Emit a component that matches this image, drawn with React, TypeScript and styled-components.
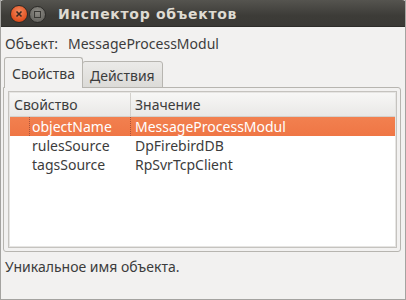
import React from 'react';
import styled, { createGlobalStyle } from 'styled-components';

const GlobalStyle = createGlobalStyle`
  html, body {
    margin: 0;
    padding: 0;
    background: #f2f1f0;
  }
  * {
    box-sizing: border-box;
  }
`;

const rows = [
  { name: 'objectName', value: 'MessageProcessModul', selected: true },
  { name: 'rulesSource', value: 'DpFirebirdDB', selected: false },
  { name: 'tagsSource', value: 'RpSvrTcpClient', selected: false },
];

const App: React.FC = () => {
  return (
    <>
      <GlobalStyle />
      <Window>
        <TitleBar>
          <WindowButtons>
            <CloseButton>
              <svg width="8" height="8" viewBox="0 0 8 8">
                <path d="M1.5 1.5 L6.5 6.5 M6.5 1.5 L1.5 6.5" stroke="#3a2a22" strokeWidth="1.6" />
              </svg>
            </CloseButton>
            <MinButton>
              <MinSquare />
            </MinButton>
          </WindowButtons>
          <Title>Инспектор объектов</Title>
        </TitleBar>
        <Body>
          <ObjectLine>
            <span>Объект:</span>
            <span>MessageProcessModul</span>
          </ObjectLine>
          <TabBar>
            <Tab active>Свойства</Tab>
            <Tab>Действия</Tab>
          </TabBar>
          <Pane>
            <Tree>
              <HeaderRow>
                <HeaderCell width={121}>Свойство</HeaderCell>
                <HeaderCell>Значение</HeaderCell>
              </HeaderRow>
              {rows.map(row => (
                <Row key={row.name} selected={row.selected}>
                  <NameCell selected={row.selected}>
                    <Focus selected={row.selected}>{row.name}</Focus>
                  </NameCell>
                  <ValueCell>{row.value}</ValueCell>
                </Row>
              ))}
            </Tree>
          </Pane>
          <Status>Уникальное имя объекта.</Status>
        </Body>
      </Window>
    </>
  );
};

export default App;

const Window = styled.div`
  width: 406px;
  height: 300px;
  display: flex;
  flex-direction: column;
  border: 1px solid #a4a3a0;
  border-top: none;
  font-family: 'Noto Sans', 'DejaVu Sans', sans-serif;
  font-size: 14px;
  color: #3c3c3c;
  overflow: hidden;
`;

const TitleBar = styled.div`
  height: 27px;
  flex: none;
  margin: 0 -1px;
  display: flex;
  align-items: center;
  background: linear-gradient(#55544f, #3d3c38 60%, #3a3935);
  border-radius: 4px 4px 0 0;
  border-bottom: 1px solid #2e2d2a;
`;

const WindowButtons = styled.div`
  display: flex;
  align-items: center;
  gap: 1px;
  padding-left: 10px;
  padding-top: 2px;
`;

const CloseButton = styled.div`
  width: 18px;
  height: 18px;
  border-radius: 50%;
  background: radial-gradient(circle at 50% 35%, #f38a5f, #e0501f 70%, #b63d15);
  border: 1px solid #2c2b28;
  display: flex;
  align-items: center;
  justify-content: center;
`;

const MinButton = styled.div`
  width: 17px;
  height: 17px;
  border-radius: 50%;
  background: radial-gradient(circle at 50% 35%, #8e8c86, #6a6964 70%, #55544f);
  border: 1px solid #2c2b28;
  display: flex;
  align-items: center;
  justify-content: center;
`;

const MinSquare = styled.div`
  width: 7px;
  height: 7px;
  border: 1.5px solid #3a3935;
`;

const Title = styled.div`
  margin-left: 12px;
  padding-top: 1px;
  font-family: 'DejaVu Sans', sans-serif;
  font-weight: bold;
  font-size: 14px;
  color: #dfdbd2;
  letter-spacing: 0.7px;
`;

const Body = styled.div`
  flex: 1;
  display: flex;
  flex-direction: column;
  padding: 0 4px 0 2px;
`;

const ObjectLine = styled.div`
  height: 31px;
  display: flex;
  align-items: flex-end;
  gap: 10px;
  padding-left: 2px;
  padding-bottom: 5px;
`;

const TabBar = styled.div`
  height: 30px;
  display: flex;
  align-items: flex-end;
  padding-left: 1px;
  position: relative;
  z-index: 1;
  margin-bottom: -1px;
`;

const Tab = styled.div<{ active?: boolean }>`
  height: ${p => (p.active ? 31 : 27)}px;
  padding: 0 7px 0 7px;
  display: flex;
  align-items: center;
  border: 1px solid #b7b5b0;
  border-bottom: ${p => (p.active ? 'none' : '1px solid #b7b5b0')};
  border-radius: 3px 3px 0 0;
  background: ${p => (p.active ? '#f2f1f0' : 'linear-gradient(#ebeae8, #dcdbd8)')};
  margin-left: ${p => (p.active ? 0 : -1)}px;
  padding-top: ${p => (p.active ? 0 : 1)}px;
`;

const Pane = styled.div`
  height: 165px;
  border: 1px solid #b7b5b0;
  border-radius: 0 3px 3px 3px;
  padding: 3px 3px 3px 4px;
  display: flex;
`;

const Tree = styled.div`
  flex: 1;
  background: #ffffff;
  border: 1px solid #c5c3bf;
  box-shadow: inset 0 0 0 1px #e6e5e3;
  display: flex;
  flex-direction: column;
  padding: 1px;
`;

const HeaderRow = styled.div`
  height: 24px;
  display: flex;
  background: linear-gradient(#f7f7f6, #e9e8e6);
  border-bottom: 1px solid #d3d1cd;
`;

const HeaderCell = styled.div<{ width?: number }>`
  ${p => (p.width ? `width: ${p.width}px;` : 'flex: 1;')}
  display: flex;
  align-items: center;
  padding-left: 4px;
  border-right: ${p => (p.width ? '1px solid #d3d1cd' : 'none')};
`;

const Row = styled.div<{ selected?: boolean }>`
  height: 19px;
  display: flex;
  align-items: stretch;
  background: ${p => (p.selected ? 'linear-gradient(#f2804f, #ef7645)' : 'transparent')};
  color: ${p => (p.selected ? '#ffffff' : '#3c3c3c')};
`;

const NameCell = styled.div<{ selected?: boolean }>`
  width: 121px;
  padding-left: 19px;
  display: flex;
  border-right: ${p => (p.selected ? '1px dotted #a9533a' : 'none')};
`;

const Focus = styled.div<{ selected?: boolean }>`
  flex: 1;
  display: flex;
  align-items: center;
  padding-left: 2px;
  border-left: ${p => (p.selected ? '1px dotted #a9533a' : '1px solid transparent')};
`;

const ValueCell = styled.div`
  flex: 1;
  display: flex;
  align-items: center;
  padding-left: 4px;
`;

const Status = styled.div`
  flex: 1;
  padding: 5px 0 0 2px;
`;
